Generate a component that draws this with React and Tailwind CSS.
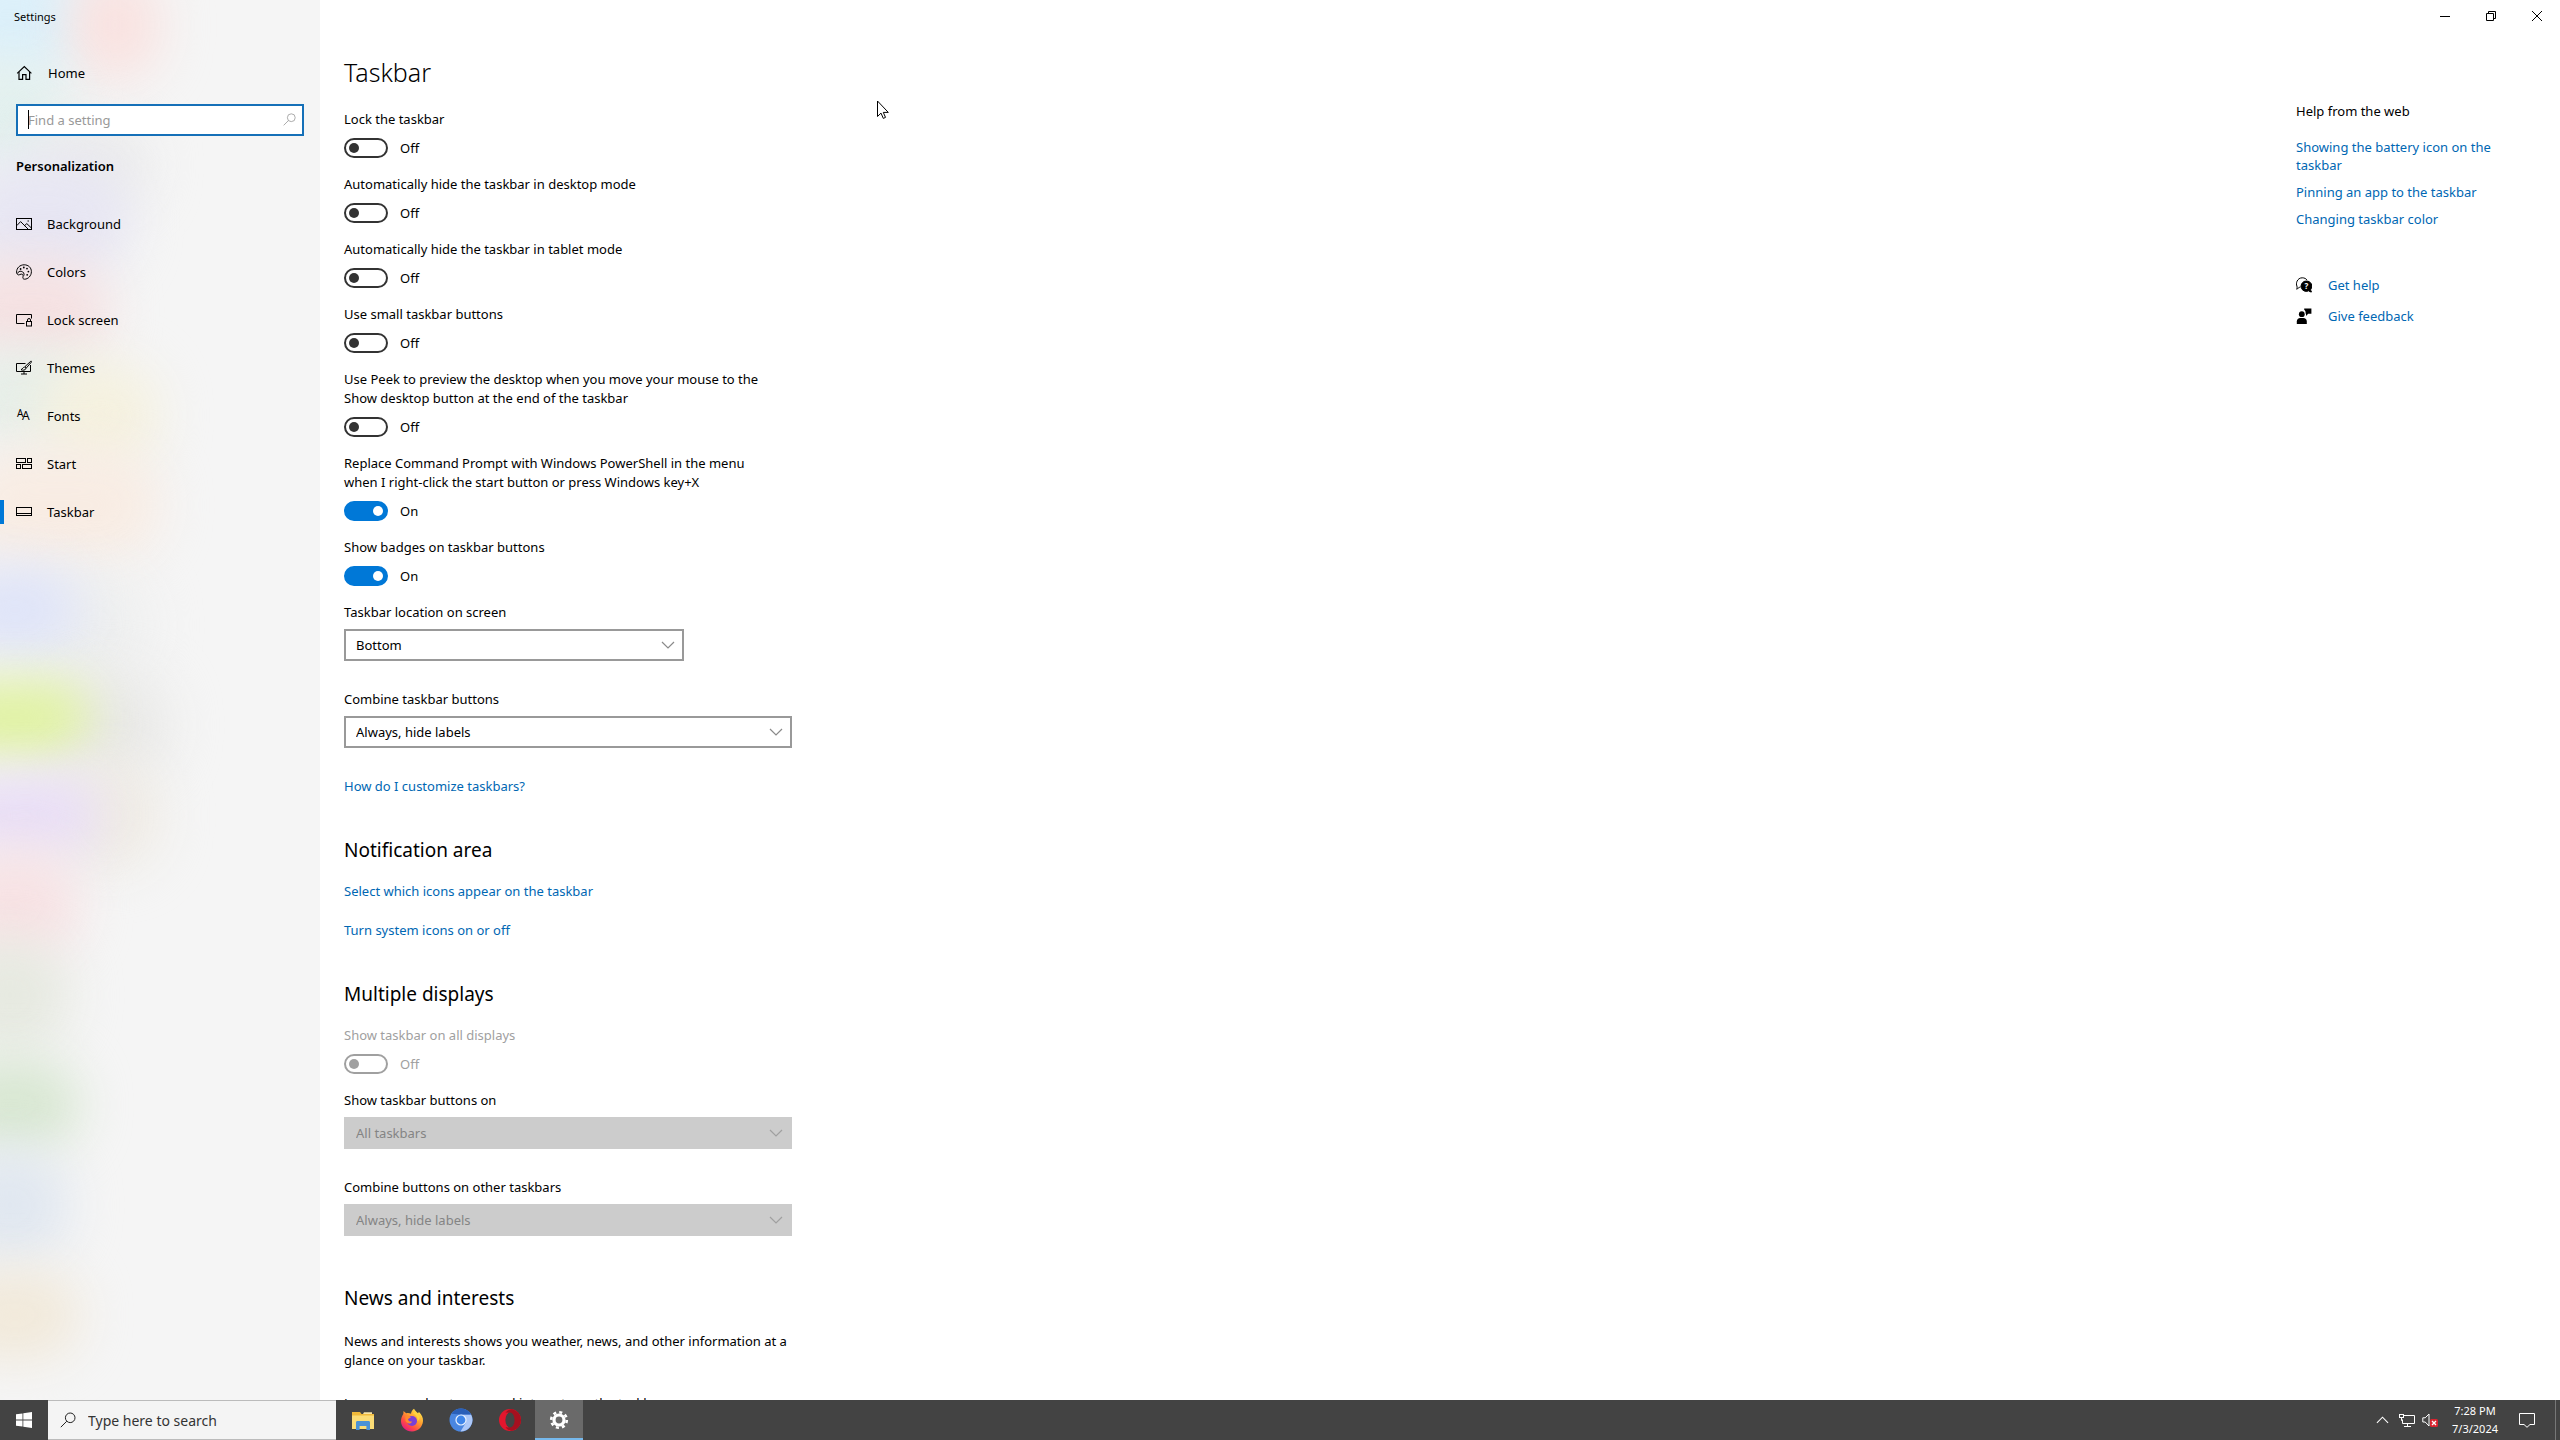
import React from 'react';

/* ---------- icons ---------- */

function Svg({ children, className = "size-4", ...rest }) {
  return (
    <svg viewBox="0 0 16 16" fill="none" stroke="currentColor" strokeWidth="1" className={`shrink-0 ${className}`} aria-hidden="true" {...rest}>
      {children}
    </svg>
  );
}

const HomeIcon = () => (
  <Svg strokeWidth="1.2">
    <path d="M1.2 8.4 8.3 1.6l7.1 6.8" />
    <path d="M3 7v7.4h3.6V9.6h3.4v4.8h3.6V7" />
  </Svg>
);

const PictureIcon = () => (
  <Svg>
    <rect x=".5" y="2.5" width="15" height="11" />
    <path d="M.8 9.6 4.6 5.6l7.6 7.6M8.6 9.6l2.2-2 4.4 4.2" />
    <path d="M11.5 5h1.4" />
  </Svg>
);

const PaletteIcon = () => (
  <Svg>
    <path d="M8.2.8c4.2 0 7.2 2.9 7.2 6.8 0 4.2-3.3 7.6-6.8 7.6-1.5 0-2-1-1.6-2.3.5-1.6-.2-3-1.8-2.8-1.3.1-1.6 1-2.7.8C1.2 10.7.6 9.4.6 8 .6 4 3.8.8 8.2.8Z" />
    <path d="M1.6 9.5c.6-1.8 2-2.6 3.6-2.2 2.3.5 3.3 2.3 2.7 4.3" />
    <g fill="currentColor" stroke="none">
      <circle cx="4.6" cy="5" r=".9" />
      <circle cx="7.8" cy="3.5" r=".9" />
      <circle cx="11" cy="4.6" r=".9" />
      <circle cx="12.4" cy="7.6" r=".9" />
      <circle cx="11.2" cy="10.8" r=".9" />
    </g>
  </Svg>
);

const LockScreenIcon = () => (
  <Svg>
    <path d="M8.5 11.5H.5v-9h15v4" />
    <rect x="10.5" y="9.5" width="5" height="4.5" />
    <path d="M11.5 9.5V8a1.5 1.5 0 0 1 3 0v1.5" />
  </Svg>
);

const ThemesIcon = () => (
  <Svg>
    <path d="M9.5 3.5h-9v8h14v-6.5M5 14h6M8 11.5V14" />
    <path d="M14.8 1.2 9 6.6l1.4 1.3 5-5.8c.4-.7-.1-1.2-.6-.9Z" />
    <path d="M8.6 7.1c-1.6 0-1.8 1.8-3.6 2.6 1.8.9 4.6.6 5-1.4Z" />
  </Svg>
);

const FontsIcon = () => (
  <Svg fill="currentColor" stroke="none" className="size-4 overflow-visible">
    <text x="1" y="9" fontSize="10" fontFamily="Noto Sans, sans-serif">A</text>
    <text x="6" y="12" fontSize="12" fontFamily="Noto Sans, sans-serif">A</text>
  </Svg>
);

const StartIcon = () => (
  <Svg>
    <rect x=".5" y="2.5" width="9" height="4" />
    <rect x="11.5" y="2.5" width="4" height="4" />
    <rect x=".5" y="8.5" width="4" height="4" />
    <rect x="6.5" y="8.5" width="9" height="4" />
  </Svg>
);

const TaskbarIcon = () => (
  <Svg>
    <rect x=".5" y="3.5" width="15" height="8" />
    <path d="M.5 9.5h15" />
  </Svg>
);

const SearchIcon = ({ className }) => (
  <Svg className={className}>
    <circle cx="10.2" cy="5.8" r="4.8" />
    <path d="M6.8 9.2.8 15.2" />
  </Svg>
);

const ChevronIcon = ({ className }) => (
  <svg viewBox="0 0 14 8" fill="none" stroke="currentColor" strokeWidth="1.2" className={className} aria-hidden="true">
    <path d="m1 1 6 6 6-6" />
  </svg>
);

const GetHelpIcon = () => (
  <Svg>
    <path d="M4.6 9.8C2.6 10.5 1.4 12 .6 12.2c.5-.8.7-1.8.3-3.200C.2 7.800.5 5.800.8 4.800 1.800 2 4 .8 6.200.8c2.300 0 3.900.9 4.800 2.300" />
    <path d="M10.3 4a5.200 5.200 0 1 0 2.400 9.800c.8.800 1.600 1.200 2.800 1.200-.6-.7-.8-1.500-.8-2.500A5.200 5.200 0 0 0 10.300 4Z" fill="currentColor" />
    <text x="8.500" y="12" fontSize="8" fontWeight="700" fill="#fff" stroke="none" fontFamily="Noto Sans, sans-serif">?</text>
  </Svg>
);

const FeedbackIcon = () => (
  <Svg fill="currentColor" stroke="none">
    <circle cx="5.8" cy="6.2" r="2.9" />
    <path d="M.8 16v-2.500c0-2.200 1.500-3.500 3.400-3.500h3.200c2 0 3.400 1.300 3.400 3.500V16Z" />
    <path d="M8.200.4h7.200v5.400h-3.200L10 8V5.800H9.600c.2-2-.3-3.200-1.400-4Z" />
  </Svg>
);

const WindowsLogo = () => (
  <Svg fill="currentColor" stroke="none">
    <path d="M0 2.300 6.500 1.400v6.200H0ZM7.300 1.300 16 0v7.600H7.300ZM0 8.400h6.500v6.200L0 13.700ZM7.300 8.400H16V16l-8.700-1.300Z" />
  </Svg>
);

const ExplorerLogo = () => (
  <svg viewBox="0 0 22 19" className="h-[19px] w-[22px]" aria-hidden="true">
    <path d="M0 1h8l1.500 2H22v15H0Z" fill="#f0b93a" />
    <path d="M0 4.500h22V18H0Z" fill="#fbdc76" />
    <path d="M12 1.200h8v1.800h-9Z" fill="#f7e3a4" />
    <path d="M4 19v-7.500c0-.8.500-1.500 1.400-1.500h11.200c.9 0 1.400.7 1.400 1.500V19h-3.600v-4H7.600v4Z" fill="#4a92d6" />
  </svg>
);

const FirefoxLogo = () => (
  <svg viewBox="0 0 24 24" className="size-6" aria-hidden="true">
    <defs>
      <linearGradient id="ff-body" x1=".8" y1=".1" x2=".2" y2=".9">
        <stop offset="0" stopColor="#ffe04a" />
        <stop offset=".4" stopColor="#ff9a2e" />
        <stop offset=".75" stopColor="#ff4a45" />
        <stop offset="1" stopColor="#e8217b" />
      </linearGradient>
    </defs>
    <path d="M14 .8c1 2 2.500 3 4 4.500.6-.3.800-1 .800-1.500 3 3 4.400 6 4.200 9.200C22.700 18.900 18 23.400 12 23.400S1 18.900 1 13.200c0-2.700.8-5 2.300-7.200L3.500 3l2.700 2.200C8 4.800 9.600 5 11 5.800c.3-2 1.200-3.700 3-5Z" fill="url(#ff-body)" />
    <circle cx="12" cy="13" r="5" fill="#7a3fd6" />
    <path d="M5.500 8c2.500-.7 4 0 5.500 1.200-1 1-2.500 1-3 2 .3 2 2 2.600 4 2.300-1 3-5 2.500-6.500-.5Z" fill="#ff8a2c" />
    <path d="M13 5.500c3 1.500 5 4 4.500 7.500 2-1 2.500-3 2-5L15 3Z" fill="#ffd23e" />
  </svg>
);

const ChromiumLogo = () => (
  <svg viewBox="0 0 24 24" className="size-6" aria-hidden="true">
    <circle cx="12" cy="12" r="11.5" fill="#4a86e0" />
    <path d="M12 6.500h10A11.500 11.500 0 0 1 11.500 23.500L17 14.500Z" fill="#adc8f8" />
    <path d="M2.300 5.800A11.500 11.500 0 0 1 22 6.500H12Z" fill="#2a5fb8" />
    <circle cx="12" cy="12" r="5.6" fill="#e8f1ff" />
    <circle cx="12" cy="12" r="4.4" fill="#3f86ea" />
  </svg>
);

const OperaLogo = () => (
  <svg viewBox="0 0 24 24" className="size-6" aria-hidden="true">
    <circle cx="12" cy="12" r="11" fill="#e3162d" />
    <path d="M15 1.400a11 11 0 0 1 0 21.200c-3 .4-6-1-7.500-3.600 3 1.500 8.500-1 8.500-7s-5.500-8.500-8.500-7C9 2.400 12 1 15 1.400Z" fill="#a5101f" />
    <ellipse cx="12" cy="12" rx="4.6" ry="7.4" fill="#434343" />
  </svg>
);

const GearLogo = () => (
  <svg viewBox="0 0 20 20" className="size-5" fill="none" stroke="#fff" aria-hidden="true">
    <circle cx="10" cy="10" r="5" strokeWidth="3.2" />
    <circle cx="10" cy="10" r="7.8" strokeWidth="2.6" strokeDasharray="3.06 3.066" />
  </svg>
);

/* ---------- data ---------- */

// soft colour patches showing through the translucent sidebar
const glows = [
  "left-[-60px] top-[-50px] h-[130px] w-[150px] bg-[#dcf0fa]",
  "left-[70px] top-[-30px] h-[110px] w-[90px] bg-[#f9e2e0]",
  "left-[-50px] top-[60px] h-[110px] w-[120px] bg-[#e2f0ee]",
  "left-[30px] top-[120px] h-[90px] w-[120px] bg-[#ebebec]",
  "left-[-40px] top-[160px] h-[120px] w-[170px] bg-[#e7e6f3]",
  "left-[-50px] top-[260px] h-[100px] w-[160px] bg-[#f5e1e2]",
  "left-[-50px] top-[350px] h-[90px] w-[140px] bg-[#e6eee8]",
  "left-[40px] top-[360px] h-[110px] w-[120px] bg-[#f5f1df]",
  "left-[-40px] top-[450px] h-[110px] w-[200px] bg-[#f8ece3]",
  "left-[40px] top-[570px] h-[110px] w-[110px] bg-[#eeefef]",
  "left-[-50px] top-[565px] h-[90px] w-[130px] bg-[#dfe4f8]",
  "left-[50px] top-[670px] h-[110px] w-[120px] bg-[#e9e9e7]",
  "left-[-60px] top-[680px] h-[76px] w-[150px] bg-[#e0f2a2]",
  "left-[60px] top-[760px] h-[110px] w-[100px] bg-[#efebe4]",
  "left-[-50px] top-[775px] h-[80px] w-[150px] bg-[#e9def6]",
  "left-[-50px] top-[850px] h-[110px] w-[130px] bg-[#f7e2e4]",
  "left-[-50px] top-[940px] h-[110px] w-[120px] bg-[#e6e9e0]",
  "left-[-50px] top-[1060px] h-[90px] w-[130px] bg-[#d8e7d2]",
  "left-[-50px] top-[1150px] h-[110px] w-[120px] bg-[#e0e7f0]",
  "left-[-50px] top-[1270px] h-[90px] w-[130px] bg-[#f1e9da]",
];

const navItems = [
  { label: "Background", Icon: PictureIcon },
  { label: "Colors", Icon: PaletteIcon },
  { label: "Lock screen", Icon: LockScreenIcon },
  { label: "Themes", Icon: ThemesIcon },
  { label: "Fonts", Icon: FontsIcon },
  { label: "Start", Icon: StartIcon },
  { label: "Taskbar", Icon: TaskbarIcon, active: true },
];

const toggles = [
  { id: "lock", label: "Lock the taskbar", on: false },
  { id: "hide-desktop", label: "Automatically hide the taskbar in desktop mode", on: false },
  { id: "hide-tablet", label: "Automatically hide the taskbar in tablet mode", on: false },
  { id: "small", label: "Use small taskbar buttons", on: false },
  { id: "peek", label: "Use Peek to preview the desktop when you move your mouse to the Show desktop button at the end of the taskbar", on: false },
  { id: "powershell", label: "Replace Command Prompt with Windows PowerShell in the menu when I right-click the start button or press Windows key+X", on: true },
  { id: "badges", label: "Show badges on taskbar buttons", on: true },
];

const apps = [
  { name: "File Explorer", Logo: ExplorerLogo },
  { name: "Firefox", Logo: FirefoxLogo },
  { name: "Chromium", Logo: ChromiumLogo },
  { name: "Opera", Logo: OperaLogo },
  { name: "Settings", Logo: GearLogo, active: true },
];

/* ---------- controls ---------- */

function Toggle({ id, label, on, disabled }) {
  const [checked, setChecked] = React.useState(on);
  return (
    <div className={disabled ? "text-[#a0a0a0]" : ""}>
      <label htmlFor={id} className="block max-w-[436px]">{label}</label>
      <div className="mt-[9px] flex h-5 items-center gap-3">
        <input
          id={id}
          type="checkbox"
          role="switch"
          checked={checked}
          disabled={disabled}
          onChange={(e) => setChecked(e.target.checked)}
          className="flex h-5 w-11 appearance-none items-center rounded-full border-2 border-[#333] px-[3px] before:size-[10px] before:rounded-full before:bg-[#333] checked:justify-end checked:border-[#0078d7] checked:bg-[#0078d7] checked:before:bg-white disabled:border-[#a0a0a0] disabled:before:bg-[#a0a0a0]"
        />
        <span>{checked ? "On" : "Off"}</span>
      </div>
    </div>
  );
}

function Select({ id, label, value, disabled, width = "w-[448px]" }) {
  return (
    <div>
      <label htmlFor={id} className="block">{label}</label>
      <div className={`relative mt-[7px] ${width}`}>
        <select
          id={id}
          disabled={disabled}
          className="h-8 w-full appearance-none border-2 border-[#999] bg-white px-[10px] opacity-100 disabled:border-[#ccc] disabled:bg-[#ccc] disabled:text-[#848484]"
        >
          <option>{value}</option>
        </select>
        <ChevronIcon className={`pointer-events-none absolute top-3 right-[9px] h-2 w-[14px] ${disabled ? "text-[#a0a0a0]" : "text-[#8a8a8a]"}`} />
      </div>
    </div>
  );
}

function Link({ children, className = "" }) {
  return <a href="#" className={`text-[#0067b3] hover:text-gray-500 ${className}`}>{children}</a>;
}

/* ---------- page ---------- */

function Sidebar() {
  return (
    <aside className="relative w-80 shrink-0 overflow-hidden bg-[#f5f5f5]">
      {glows.map((g) => (
        <div key={g} className={`absolute rounded-full blur-xl ${g}`} />
      ))}
      <div className="relative">
        <div className="flex h-8 items-center pl-[14px] text-[11px]">Settings</div>
        <a href="#" className="mt-[17px] flex h-12 items-center gap-4 pl-4">
          <HomeIcon />
          Home
        </a>
        <div className="relative mx-4 mt-[7px]">
          <input
            type="text"
            aria-label="Find a setting"
            placeholder="Find a setting"
            className="h-8 w-full border-2 border-[#1570b8] bg-white px-[10px] outline-none placeholder:text-[#999]"
          />
          <span className="absolute top-[6px] left-3 h-[19px] w-px bg-black" />
          <SearchIcon className="absolute top-[9px] right-2 size-[13px] text-[#999]" />
        </div>
        <h2 className="mt-5 pl-4 leading-5 font-semibold">Personalization</h2>
        <nav className="mt-6">
          {navItems.map(({ label, Icon, active }) => (
            <a key={label} href="#" className={`flex h-12 items-center ${active ? "" : "pl-4"}`}>
              {active && <span className="mr-3 h-6 w-1 bg-[#0078d7]" />}
              <Icon />
              <span className="ml-[15px]">{label}</span>
            </a>
          ))}
        </nav>
      </div>
    </aside>
  );
}

function WindowControls() {
  return (
    <div className="flex h-8 shrink-0 justify-end">
      <button aria-label="Minimize" className="flex w-[46px] items-center justify-center">
        <svg viewBox="0 0 12 12" className="size-3" stroke="currentColor" aria-hidden="true"><path d="M1 6.500h10" /></svg>
      </button>
      <button aria-label="Restore" className="flex w-[46px] items-center justify-center">
        <svg viewBox="0 0 12 12" className="size-3" stroke="currentColor" fill="none" aria-hidden="true"><path d="M1.500 3.500h7v7h-7ZM3.500 3.500v-2h7v7h-2" /></svg>
      </button>
      <button aria-label="Close" className="flex w-[46px] items-center justify-center">
        <svg viewBox="0 0 12 12" className="size-3" stroke="currentColor" aria-hidden="true"><path d="m1 1 10 10M11 1 1 11" /></svg>
      </button>
    </div>
  );
}

function Help() {
  return (
    <aside className="mt-[70px] mr-12 flex w-[216px] shrink-0 flex-col leading-[18px]">
      <h2>Help from the web</h2>
      <Link className="mt-[18px] max-w-[210px]">Showing the battery icon on the taskbar</Link>
      <Link className="mt-[9px]">Pinning an app to the taskbar</Link>
      <Link className="mt-[9px]">Changing taskbar color</Link>
      <div className="mt-12 flex items-center gap-4">
        <GetHelpIcon />
        <Link>Get help</Link>
      </div>
      <div className="mt-[13px] flex items-center gap-4">
        <FeedbackIcon />
        <Link>Give feedback</Link>
      </div>
    </aside>
  );
}

function SystemTaskbar() {
  return (
    <footer className="flex h-10 shrink-0 bg-[#434343] text-white">
      <button aria-label="Start" className="flex w-12 items-center justify-center"><WindowsLogo /></button>
      <label className="flex w-72 items-center gap-3 border-y border-[#bbb] bg-[#f4f4f4] pl-3 text-[#222]">
        <SearchIcon className="size-4" />
        <input type="text" aria-label="Search" placeholder="Type here to search" className="w-56 bg-transparent text-[14px] outline-none placeholder:text-[#333]" />
      </label>
      <div className="ml-[3px] flex gap-px">
        {apps.map(({ name, Logo, active }) => (
          <button
            key={name}
            aria-label={name}
            className={`flex w-12 items-center justify-center border-y-2 ${active ? "border-t-[#6a6a6a] border-b-[#76b9ed] bg-[#6a6a6a]" : "border-transparent"}`}
          >
            <Logo />
          </button>
        ))}
      </div>
      <div className="ml-auto flex items-center">
        <button aria-label="Show hidden icons" className="mr-[10px]">
          <ChevronIcon className="h-2 w-[13px] rotate-180" />
        </button>
        <button aria-label="Network" className="mr-[7px]">
          <Svg>
            <path d="M4.500 3.500h11v8H3.500V7.500M5 14.500h7M8.500 11.500v3" />
            <rect x=".5" y="2.5" width="4" height="3" />
            <path d="M2.500 5.500v3h1" />
          </Svg>
        </button>
        <button aria-label="Volume muted" className="mr-3">
          <Svg>
            <path d="M.8 5.800h2.400L7 2v12L3.200 10H.8Z" />
            <rect x="8" y="7" width="8" height="8" rx="1.5" fill="#d8232f" stroke="none" />
            <path d="m10 9 4 4M14 9l-4 4" strokeWidth="1.3" />
          </Svg>
        </button>
        <button className="mr-[19px] w-[50px] text-center text-[11px] leading-[18px]">
          7:28 PM<br />7/3/2024
        </button>
        <button aria-label="Notifications" className="mr-5">
          <Svg><path d="M.5 1.500h15v11H11L8 15.300l-3-2.800H.5Z" /></Svg>
        </button>
        <span className="mr-1 h-10 w-px bg-[#777]" />
      </div>
    </footer>
  );
}

export default function App() {
  return (
    <div className="flex h-screen flex-col overflow-hidden bg-white font-['Noto_Sans',sans-serif] text-[13px] leading-[19px] text-black">
      <div className="flex min-h-0 flex-1">
        <Sidebar />
        <div className="flex min-w-0 flex-1 flex-col">
          <WindowControls />
          <div className="flex min-h-0 flex-1 justify-between">
            <main className="w-[480px] overflow-hidden pl-6">
              <h1 className="mt-5 text-[25px] leading-10 font-light">Taskbar</h1>
              <div className="mt-[18px] flex flex-col gap-[17px]">
                {toggles.map((t) => <Toggle key={t.id} {...t} />)}
                <Select id="location" label="Taskbar location on screen" value="Bottom" width="w-[340px]" />
              </div>
              <div className="mt-[29px] mb-[29px]">
                <Select id="combine" label="Combine taskbar buttons" value="Always, hide labels" />
              </div>
              <Link className="block">How do I customize taskbars?</Link>

              <h2 className="mt-10 text-[19px] leading-7">Notification area</h2>
              <div className="mt-[18px] flex flex-col gap-5">
                <Link>Select which icons appear on the taskbar</Link>
                <Link>Turn system icons on or off</Link>
              </div>

              <h2 className="mt-10 text-[19px] leading-7">Multiple displays</h2>
              <div className="mt-[18px] flex flex-col gap-[17px]">
                <Toggle id="all-displays" label="Show taskbar on all displays" on={false} disabled />
                <Select id="buttons-on" label="Show taskbar buttons on" value="All taskbars" disabled />
              </div>
              <div className="mt-[29px]">
                <Select id="combine-other" label="Combine buttons on other taskbars" value="Always, hide labels" disabled />
              </div>

              <h2 className="mt-12 text-[19px] leading-7">News and interests</h2>
              <p className="mt-5">News and interests shows you weather, news, and other information at a glance on your taskbar.</p>
              <p className="mt-6">Learn more about news and interests on the taskbar</p>
            </main>
            <Help />
          </div>
        </div>
      </div>
      <SystemTaskbar />

      {/* mouse pointer */}
      <svg viewBox="0 0 12 19" className="pointer-events-none absolute top-[100px] left-[877px] h-[19px] w-3" fill="#fff" stroke="#000" aria-hidden="true">
        <path d="M.5 1v15.500l3.500-3.400 2.300 5.300 2.200-1-2.200-5h5Z" />
      </svg>
    </div>
  );
}
